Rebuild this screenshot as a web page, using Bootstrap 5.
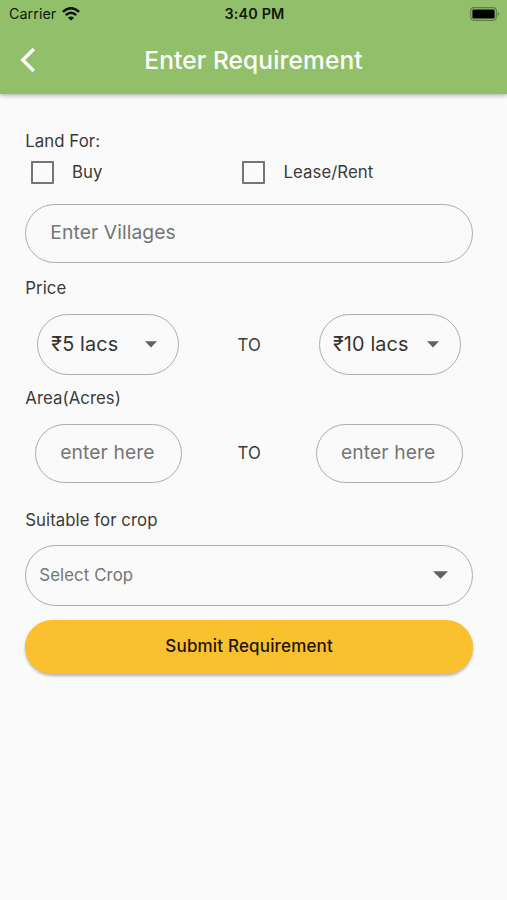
<!DOCTYPE html>
<html lang="en">
<head>
<meta charset="utf-8">
<meta name="viewport" content="width=device-width, initial-scale=1">
<title>Enter Requirement</title>
<link href="https://cdn.jsdelivr.net/npm/bootstrap@5.3.0/dist/css/bootstrap.min.css" rel="stylesheet">
<style>
body{font-family:Inter,"Liberation Sans",sans-serif;background:#fafafa;color:#3a3a3a;min-height:900px;font-size:16.8px;line-height:20px;letter-spacing:.05px}
svg{display:block;flex:none}
.app-head{background:#92bf6a;height:94px;box-shadow:0 1px 5px rgba(0,0,0,.35)}
.status{height:27px;padding:0 7px 0 9px;color:#10180a;font-size:14.3px}
.status>*{flex:1 1 0}
.wifi{margin-left:6px}
.clock{font-weight:600;font-size:14.4px;letter-spacing:.15px}
.title-bar{height:65px;padding:0 20px}
.title{font-size:24.5px;font-weight:500;line-height:30px;color:#fff;letter-spacing:.1px}
.side{width:16px}
.page{padding:36.6px 34px 0 25.3px}
.checks{margin-top:10px}
.check{width:211.5px;gap:18px;padding-left:5.7px}
.box{width:23px;height:23px;border:2px solid #757575;border-radius:1px}
.pill{border:1.4px solid #adadad;border-radius:31px}
.field{height:59px;padding:0 24px 1.6px;color:#757575;font-size:19.3px;letter-spacing:.08px}
.villages{margin-top:20px}
.price-label{margin-top:15px}
.area-label{margin-top:12px}
.crop-label{margin-top:27px}
.range{margin-top:16px}
.prices{padding:0 12px}
.areas{padding:0 10px}
.price{width:142px;height:61.5px;margin-bottom:.5px;padding:0 21px 0 13px;font-size:19.8px;color:#333;letter-spacing:.15px}
.area{width:147px}
.crop{height:61px;margin-top:15px;padding:0 24px 0 13px;color:#757575;letter-spacing:.1px}
.submit{height:54px;margin-top:14.6px;border-radius:27px;background:#fbc02d;color:#1c1503;font-size:17px;font-weight:500;letter-spacing:.17px;box-shadow:0 2px 3px rgba(0,0,0,.28)}
.submit:hover{background:#f9b91e}
</style>
<script src="https://cdn.jsdelivr.net/npm/bootstrap@5.3.0/dist/js/bootstrap.bundle.min.js"></script>
</head>
<body>
<header class="app-head">
  <div class="status d-flex align-items-center">
    <div class="d-flex align-items-center"><span>Carrier</span>
      <svg class="wifi" width="18" height="14" viewBox="0 0 18 14" fill="none" stroke="#0c1108" stroke-width="2.5"><path d="M.9 4.9Q9-2.500 17.100 4.900M3.800 8.100q5.200-4.800 10.400 0"/><path d="M9 13.600 6 10.700q3-2.500 6 0Z" fill="#0c1108" stroke="none"/></svg>
    </div>
    <div class="clock text-center">3:40 PM</div>
    <div class="d-flex justify-content-end">
      <svg width="30" height="14" viewBox="0 0 30 14"><rect x=".7" y=".7" width="25.6" height="12.6" rx="3.2" fill="none" stroke="#5f7e44" stroke-width="1.2"/><rect x="2.4" y="2.4" width="22.2" height="9.2" rx="1.4" fill="#000"/><path d="M27.700 4.800q3 2.200 0 4.400Z" fill="#5f7e44"/></svg>
    </div>
  </div>
  <div class="title-bar d-flex align-items-center justify-content-between">
    <svg class="side" width="16" height="26" viewBox="0 0 16 26" fill="none" stroke="#fff" stroke-width="3.4"><path d="M13.800 2 2.800 13l11 11"/></svg>
    <div class="title">Enter Requirement</div>
    <span class="side"></span>
  </div>
</header>
<main class="page">
  <div>Land For:</div>
  <div class="checks d-flex">
    <div class="check d-flex align-items-center"><span class="box"></span><span>Buy</span></div>
    <div class="check d-flex align-items-center"><span class="box"></span><span>Lease/Rent</span></div>
  </div>
  <div class="pill field villages d-flex align-items-center"><span>Enter Villages</span></div>
  <div class="price-label">Price</div>
  <div class="range prices d-flex align-items-center justify-content-between">
    <div class="pill price d-flex align-items-center justify-content-between"><span>₹5 lacs</span><svg width="12" height="7" viewBox="0 0 12 7" fill="#616161"><path d="M0 .3h12L6 6.600Z"/></svg></div>
    <span>TO</span>
    <div class="pill price d-flex align-items-center justify-content-between"><span>₹10 lacs</span><svg width="12" height="7" viewBox="0 0 12 7" fill="#616161"><path d="M0 .3h12L6 6.600Z"/></svg></div>
  </div>
  <div class="area-label">Area(Acres)</div>
  <div class="range areas d-flex align-items-center justify-content-between">
    <div class="pill field area d-flex align-items-center"><span>enter here</span></div>
    <span>TO</span>
    <div class="pill field area d-flex align-items-center"><span>enter here</span></div>
  </div>
  <div class="crop-label">Suitable for crop</div>
  <div class="pill crop d-flex align-items-center justify-content-between"><span>Select Crop</span><svg width="15" height="8" viewBox="0 0 15 8" fill="#616161"><path d="M0 .2h15L7.500 7.800Z"/></svg></div>
  <button type="button" class="submit btn border-0 w-100 d-block p-0">Submit Requirement</button>
</main>
</body>
</html>
